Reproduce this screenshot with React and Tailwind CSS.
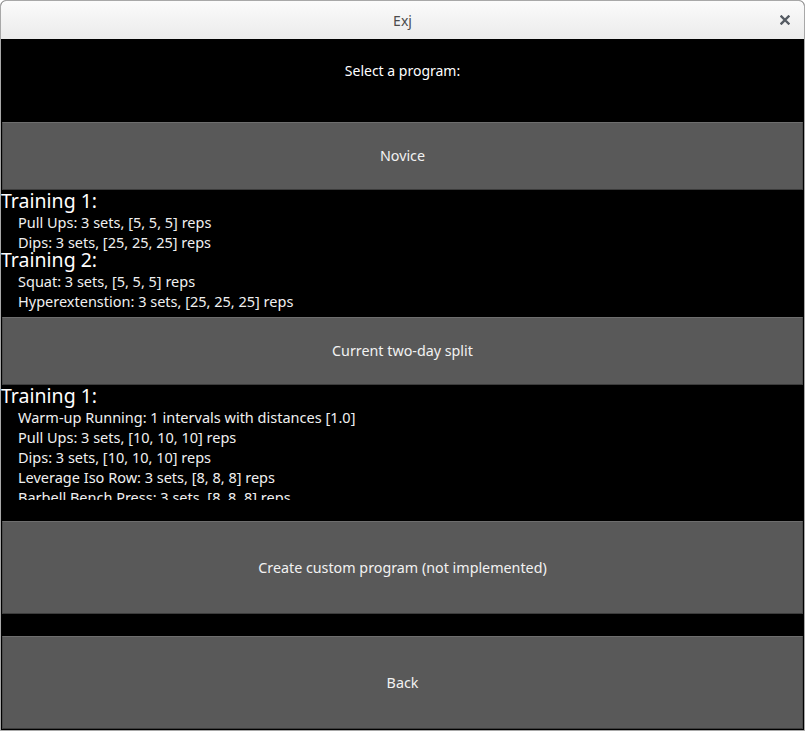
import React from "react";

const font = { fontFamily: '"Noto Sans", "Open Sans", sans-serif' };

const programs = [
    {
        name: "Novice",
        trainings: [
            { title: "Training 1:", items: ["Pull Ups: 3 sets, [5, 5, 5] reps", "Dips: 3 sets, [25, 25, 25] reps"] },
            { title: "Training 2:", items: ["Squat: 3 sets, [5, 5, 5] reps", "Hyperextenstion: 3 sets, [25, 25, 25] reps"] },
        ],
    },
    {
        name: "Current two-day split",
        trainings: [
            {
                title: "Training 1:",
                items: [
                    "Warm-up Running: 1 intervals with distances [1.0]",
                    "Pull Ups: 3 sets, [10, 10, 10] reps",
                    "Dips: 3 sets, [10, 10, 10] reps",
                    "Leverage Iso Row: 3 sets, [8, 8, 8] reps",
                    "Barbell Bench Press: 3 sets, [8, 8, 8] reps",
                ],
            },
        ],
    },
];

// --- Kivy style grey button ---
const GreyButton = ({ label, height }) => (
    <button
        className={`w-full ${height} shrink-0 bg-[#595959] border-t border-t-[#6e6e6e] border-b border-b-[#3c3c3c] border-x border-x-[#4a4a4a] text-[#f2f2f2] text-[14.3px] flex items-center justify-center`}
    >
        {label}
    </button>
);

const ProgramDetails = ({ trainings, height }) => (
    <div className={`${height} shrink-0 overflow-hidden -ml-[1px]`}>
        {trainings.map((t, i) => (
            <div key={i} className={i > 0 ? "-mt-[3px]" : ""}>
                <div className="text-[19.5px] leading-[22px] text-white whitespace-nowrap">{t.title}</div>
                {t.items.map((item) => (
                    <div key={item} className="pl-[17px] text-[14.5px] leading-[20px] text-[#f0f0f0] whitespace-nowrap">
                        {item}
                    </div>
                ))}
            </div>
        ))}
    </div>
);

export default function App() {
    return (
        <div style={font} className="w-[805px] h-[731px] flex flex-col bg-black border border-[#a8a8a8] rounded-t-[6px] overflow-hidden">
            {/* Title bar */}
            <div className="h-[38px] shrink-0 relative flex items-center justify-center bg-gradient-to-b from-[#fbfbfb] to-[#ebebeb]">
                <span className="text-[14px] text-[#4c4c4c]">Exj</span>
                <svg className="absolute right-[14px] top-[14px]" width="10" height="10" viewBox="0 0 10 10">
                    <path d="M1.5 1.5 L8.5 8.5 M8.5 1.5 L1.5 8.5" stroke="#555b63" strokeWidth="2.4" strokeLinecap="square" />
                </svg>
            </div>

            {/* Content */}
            <div className="flex-1 flex flex-col px-[1px]">
                <div className="h-[83px] shrink-0 flex justify-center pt-[21px] text-[14px] text-white">Select a program:</div>
                <GreyButton label={programs[0].name} height="h-[68px]" />
                <ProgramDetails trainings={programs[0].trainings} height="h-[127px]" />
                <GreyButton label={programs[1].name} height="h-[68px]" />
                <ProgramDetails trainings={programs[1].trainings} height="h-[115px]" />
                <div className="h-[21px] shrink-0" />
                <GreyButton label="Create custom program (not implemented)" height="h-[93px]" />
                <div className="h-[22px] shrink-0" />
                <GreyButton label="Back" height="h-[93px]" />
            </div>
        </div>
    );
}
